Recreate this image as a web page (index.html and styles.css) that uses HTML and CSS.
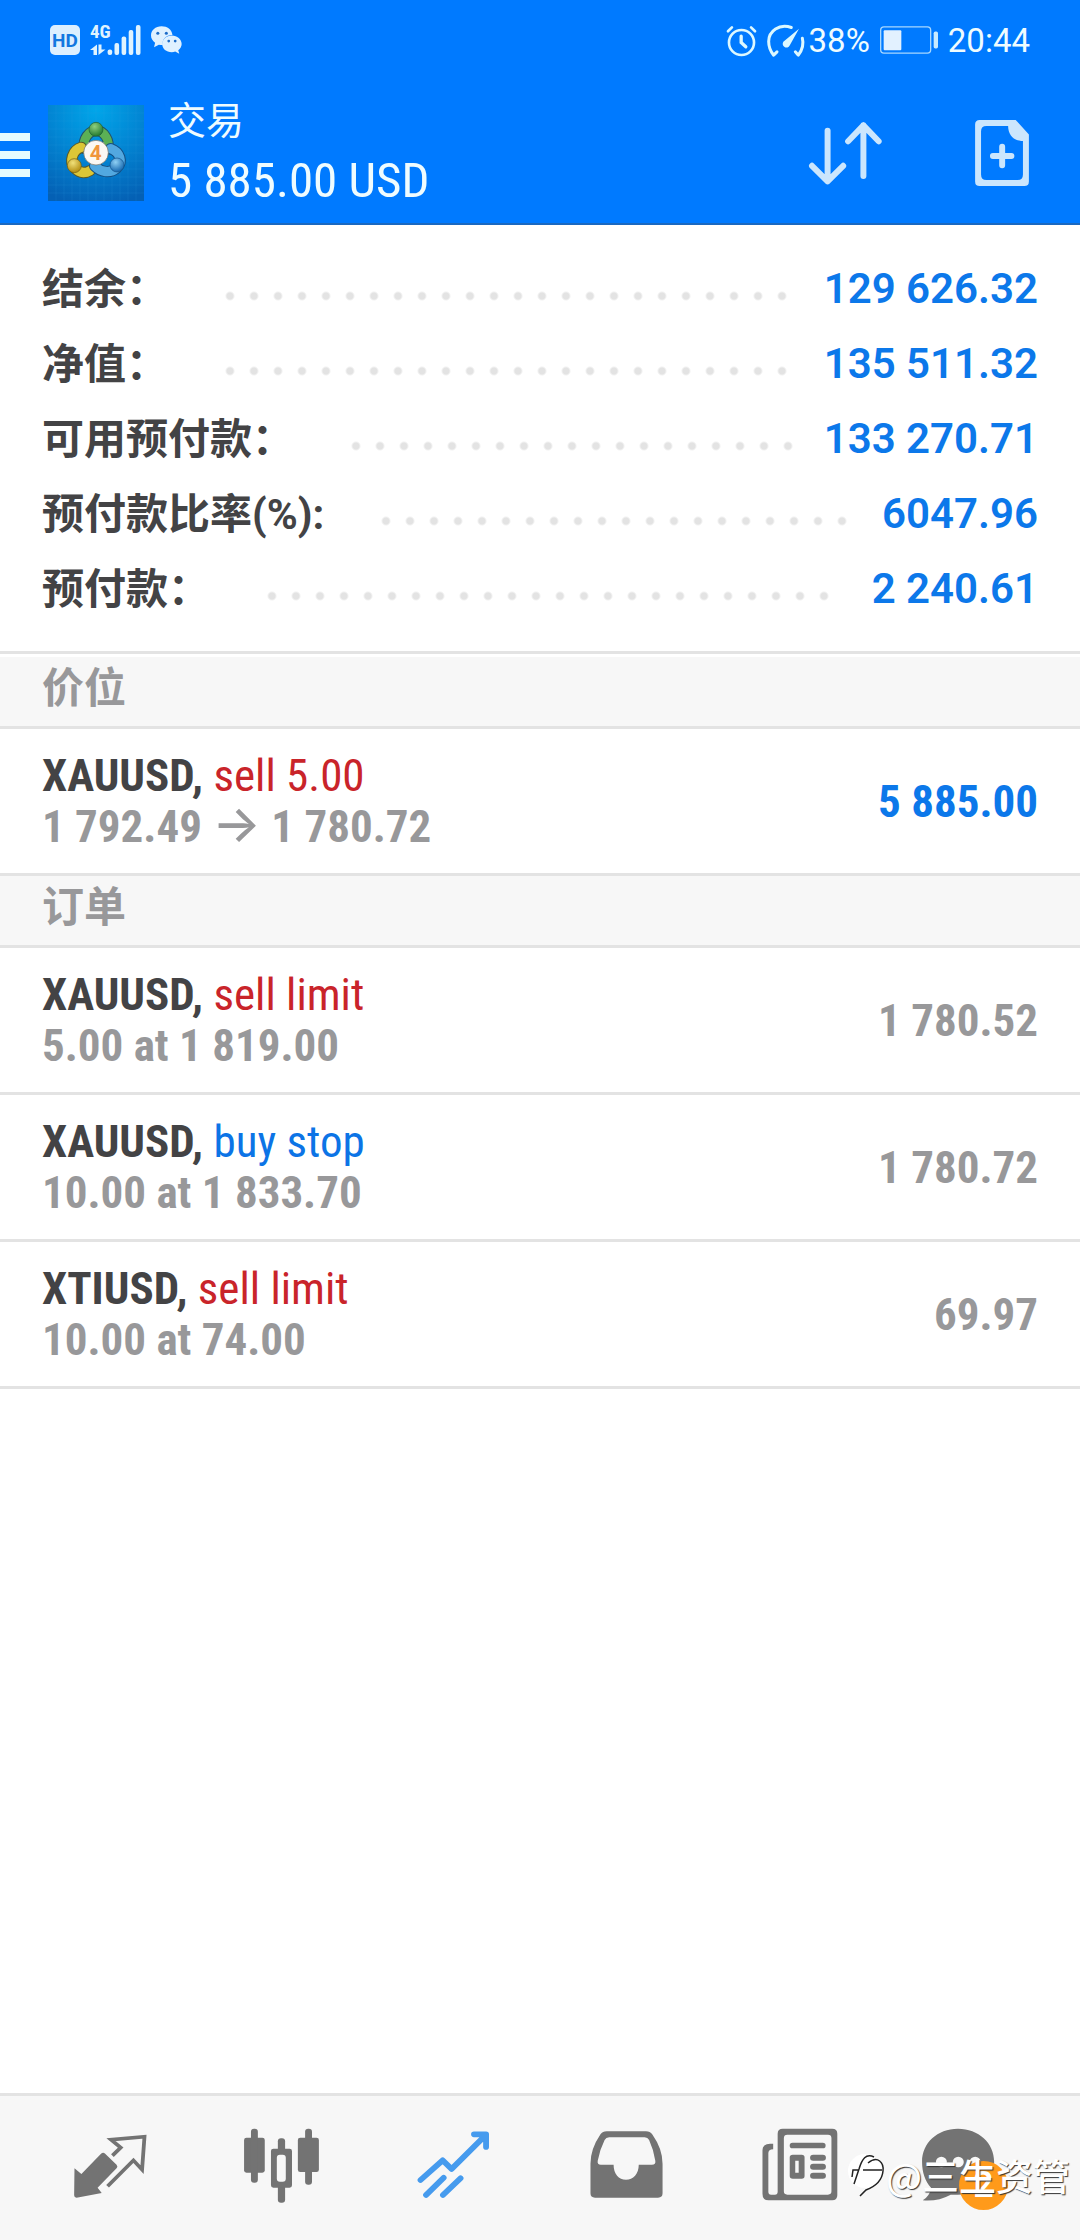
FILE: index.html
```html
<!DOCTYPE html>
<html lang="zh-CN">
<head>
<meta charset="utf-8">
<meta name="viewport" content="width=device-width, initial-scale=1">
<title>交易</title>
<link rel="stylesheet" href="styles.css">
</head>
<body>
<div class="screen">
  <header class="header">
    <div class="status">
      <div class="status-left">
        <svg class="i-hd" viewBox="0 0 30 30" aria-hidden="true"><rect width="30" height="30" rx="5" fill="#dcefff"/><text x="15" y="22" text-anchor="middle" class="hd-text">HD</text></svg>
        <svg class="i-signal" viewBox="0 0 51 32" aria-hidden="true">
          <text x="0" y="14" class="net-text">4G</text>
          <g fill="#dff3ff"><rect x="17.600" y="25.500" width="4.600" height="5.500" rx="2"/><rect x="24.500" y="19" width="4.600" height="12" rx="2"/><rect x="31.600" y="12.500" width="4.600" height="18.500" rx="2"/><rect x="38.700" y="6" width="4.600" height="25" rx="2"/><rect x="45.900" y="1" width="4.600" height="30" rx="2"/>
          <path d="M0 26 7 20.500V31H3.500V26ZM8.500 20.500H11.500V25.500H15.500L8.500 31Z"/></g>
        </svg>
        <svg class="i-wechat" viewBox="440 82 91 82" aria-hidden="true">
          <path fill="#dff1ff" d="M471 83c-18 0-31 12-31 27 0 9 5 16 12 21l-3 13 14-7c4 1 8 1 12 1-4-17 9-30 28-30-2-15-15-25-32-25z"/>
          <path fill="#dff1ff" d="M501 110c-16 0-28 11-28 25s12 24 28 24c4 0 7-1 10-2l12 6-3-10c6-4 10-11 10-18 0-14-13-25-29-25z"/>
          <g fill="#1d6cc8"><circle cx="460" cy="103" r="4.500"/><circle cx="485" cy="103" r="4.500"/><circle cx="492" cy="126" r="4"/><circle cx="511" cy="126" r="4"/></g>
        </svg>
      </div>
      <div class="status-right">
        <svg class="i-alarm" viewBox="256 70 94 98" fill="none" stroke="#dcf8ff" stroke-linecap="round" aria-hidden="true"><circle cx="303" cy="125" r="38" stroke-width="8"/><path stroke-width="8" d="M262 91 274 79M344 91 332 79"/><path stroke-width="10" d="M302 106V125L316 138"/></svg>
        <svg class="i-gauge" viewBox="378 70 114 98" fill="none" stroke="#dcf8ff" stroke-linecap="round" stroke-linejoin="round" aria-hidden="true"><path stroke-width="9" d="M451 80C415 67 383 91 383 122Q383 145 398 163L408 153M484 112Q491 138 472 163L463 153"/><path fill="#dcf8ff" stroke="none" d="M474 84 446 134A11 11 0 1 1 427 123Z"/></svg>
        <span class="percent">38%</span>
        <svg class="i-battery" viewBox="717 80 174 83" aria-hidden="true"><rect x="719" y="82" width="150" height="79" rx="10" fill="none" stroke="#a8d8ff" stroke-width="4"/><rect x="728" y="92" width="53" height="60" rx="3" fill="#e2f1ff"/><rect x="878" y="96" width="13" height="51" rx="5" fill="#c8ebff"/></svg>
        <time class="clock">20:44</time>
      </div>
    </div>
    <div class="appbar">
      <button class="menu" type="button" aria-label="菜单"><span></span><span></span><span></span></button>
      <svg class="logo" viewBox="24 15 288 288" aria-hidden="true">
        <defs>
          <radialGradient id="bg" cx=".5" cy=".05" r="1"><stop offset="0" stop-color="#00a6ea"/><stop offset=".5" stop-color="#0284d2"/><stop offset="1" stop-color="#0460b4"/></radialGradient>
          <radialGradient id="gr" cx=".4" cy=".3" r=".7"><stop offset="0" stop-color="#8fd07e"/><stop offset="1" stop-color="#237a30"/></radialGradient>
          <radialGradient id="ye" cx=".4" cy=".3" r=".7"><stop offset="0" stop-color="#f0e07a"/><stop offset="1" stop-color="#b38d10"/></radialGradient>
          <radialGradient id="bl" cx=".4" cy=".3" r=".7"><stop offset="0" stop-color="#8fd0f4"/><stop offset="1" stop-color="#1668b0"/></radialGradient>
        </defs>
        <rect x="24" y="15" width="288" height="288" fill="url(#bg)"/>
        <path stroke="#38a8e4" stroke-opacity=".3" stroke-width="1.500" d="M48 15V303M72 15V303M96 15V303M120 15V303M144 15V303M168 15V303M192 15V303M216 15V303M240 15V303M264 15V303M288 15V303M24 39H312M24 63H312M24 87H312M24 111H312M24 135H312M24 159H312M24 183H312M24 207H312M24 231H312M24 255H312M24 279H312"/>
        <g fill="none" stroke-linecap="round">
          <path stroke="#24506a" stroke-width="32" d="M132 146C128 116 146 92 169 92S210 120 204 148"/>
          <path stroke="#5bb055" stroke-width="26" d="M132 146C128 116 146 92 169 92S210 120 204 148"/>
          <path stroke="#5b5a28" stroke-width="34" d="M124 142C98 150 86 184 104 204S140 218 150 212"/>
          <path stroke="#dcc636" stroke-width="28" d="M124 142C98 150 86 184 104 204S140 218 150 212"/>
          <path stroke="#145084" stroke-width="34" d="M212 146C240 156 250 186 230 204S182 216 164 198"/>
          <path stroke="#52a8e0" stroke-width="28" d="M212 146C240 156 250 186 230 204S182 216 164 198"/>
        </g>
        <circle cx="168" cy="88" r="21" fill="url(#gr)" stroke="#1d5c34" stroke-width="2"/>
        <circle cx="103" cy="197" r="21" fill="url(#ye)" stroke="#6e5c12" stroke-width="2"/>
        <circle cx="231" cy="195" r="21" fill="url(#bl)" stroke="#12508a" stroke-width="2"/>
        <circle cx="168" cy="158" r="37" fill="#fbf8f4" stroke="#6a6a60" stroke-width="2"/>
        <text x="167" y="180" text-anchor="middle" class="logo-text">4</text>
      </svg>
      <div class="titles">
        <h1 class="title">交易</h1>
        <p class="profit">5 885.00 USD</p>
      </div>
      <div class="actions">
        <button class="icon-button" type="button" aria-label="排序"><svg class="i-sort" viewBox="508 363 220 190" fill="none" stroke="#cbe6fd" stroke-width="18" stroke-linecap="round" stroke-linejoin="round" aria-hidden="true"><path d="M564 389V542M517 495 564 542 611 495M672 526V373M626 421 672 373 718 421"/></svg></button>
        <button class="icon-button" type="button" aria-label="新订单"><svg class="i-doc" viewBox="1004 359 163 200" aria-hidden="true"><path fill="#cbe6fd" fill-rule="evenodd" d="M1018 359H1127L1167 403V545Q1167 559 1153 559H1018Q1004 559 1004 545V373Q1004 359 1018 359ZM1038 377Q1022 377 1022 393V524Q1022 541 1038 541H1133Q1149 541 1149 524V423C1122 423 1104 404 1104 377Z"/><path d="M1086 440V496M1058 468H1114" stroke="#cbe6fd" stroke-width="18" stroke-linecap="round"/></svg></button>
      </div>
    </div>
  </header>

  <main class="content">
    <dl class="summary">
      <div class="summary-row"><dt>结余：</dt><dd>129 626.32</dd></div>
      <div class="summary-row"><dt>净值：</dt><dd>135 511.32</dd></div>
      <div class="summary-row"><dt>可用预付款：</dt><dd>133 270.71</dd></div>
      <div class="summary-row"><dt>预付款比率(%):</dt><dd>6047.96</dd></div>
      <div class="summary-row"><dt>预付款：</dt><dd>2 240.61</dd></div>
    </dl>

    <h2 class="section">价位</h2>
    <ul class="list">
      <li class="item">
        <div class="item-main">
          <p class="symbol">XAUUSD, <span class="sell">sell 5.00</span></p>
          <p class="detail">1 792.49 <span class="arrow">→</span> 1 780.72</p>
        </div>
        <p class="value value-gain">5 885.00</p>
      </li>
    </ul>

    <h2 class="section">订单</h2>
    <ul class="list">
      <li class="item">
        <div class="item-main">
          <p class="symbol">XAUUSD, <span class="sell">sell limit</span></p>
          <p class="detail">5.00 at 1 819.00</p>
        </div>
        <p class="value">1 780.52</p>
      </li>
      <li class="item">
        <div class="item-main">
          <p class="symbol">XAUUSD, <span class="buy">buy stop</span></p>
          <p class="detail">10.00 at 1 833.70</p>
        </div>
        <p class="value">1 780.72</p>
      </li>
      <li class="item">
        <div class="item-main">
          <p class="symbol">XTIUSD, <span class="sell">sell limit</span></p>
          <p class="detail">10.00 at 74.00</p>
        </div>
        <p class="value">69.97</p>
      </li>
    </ul>
  </main>

  <nav class="tabs">
    <button class="tab" type="button" aria-label="行情">
      <svg viewBox="203 130 232 240" preserveAspectRatio="none" aria-hidden="true"><path fill="#737373" d="M216 266 236 283 293 222Q299 216 305 222L338 255Q343 261 338 266L283 324 295 340 222 354Q215 354 215 347Z"/><path fill="none" stroke="#737373" stroke-width="11" stroke-linejoin="miter" stroke-linecap="butt" d="M326 228 350 204 322 180 419 171 412 270 387 242 312 320"/></svg>
    </button>
    <button class="tab" type="button" aria-label="图表">
      <svg viewBox="703 130 232 240" preserveAspectRatio="none" aria-hidden="true"><g fill="#737373"><rect x="709" y="174" width="60" height="105" rx="7"/><rect x="729" y="147" width="20" height="162" rx="9"/><rect x="865" y="174" width="61" height="103" rx="7"/><rect x="886" y="147" width="20" height="168" rx="9"/><rect x="807" y="176" width="21" height="40" rx="9"/><rect x="807" y="315" width="21" height="54" rx="9"/><path fill-rule="evenodd" d="M794 207H841Q848 207 848 214V317Q848 324 841 324H794Q787 324 787 317V214Q787 207 794 207ZM813 225Q804 225 804 234V297Q804 306 813 306H821Q830 306 830 297V234Q830 225 821 225Z"/></g></svg>
    </button>
    <button class="tab" type="button" aria-label="交易" aria-current="page">
      <svg viewBox="1202 130 232 240" preserveAspectRatio="none" fill="none" stroke="#469bee" stroke-width="17" stroke-linecap="round" stroke-linejoin="round" aria-hidden="true"><path d="M1221 301 1285 242 1311 268 1408 168M1376 164H1411V202M1237 346 1288 294M1286 346 1337 296"/></svg>
    </button>
    <button class="tab" type="button" aria-label="历史">
      <svg viewBox="134 130 232 240" preserveAspectRatio="none" aria-hidden="true"><path fill="#737373" fill-rule="evenodd" d="M194 155H308Q320 155 326 164Q356 208 356 252V341Q356 354 343 354H160Q147 354 147 341V252Q147 208 176 164Q182 155 194 155ZM201 173Q192 173 188 181Q174 210 168 243Q166 255 177 255H214C214 283 229 300 250 300S287 283 287 255H325Q337 255 335 243Q330 210 317 181Q313 173 304 173Z"/></svg>
    </button>
    <button class="tab" type="button" aria-label="新闻">
      <svg viewBox="633 130 232 240" preserveAspectRatio="none" aria-hidden="true"><g fill="#737373"><path fill-rule="evenodd" d="M705 147H848Q863 147 863 162V347Q863 362 848 362H664Q646 362 646 342V212Q646 192 668 192H677V209Q663 210 663 220V336Q663 345 671 345H682Q690 345 690 336V162Q690 147 705 147ZM718 165Q708 165 708 175V335Q708 345 718 345H836Q846 345 846 335V175Q846 165 836 165Z"/><rect x="725" y="189" width="104" height="17" rx="8"/><path fill-rule="evenodd" d="M734 225H760Q768 225 768 233V289Q768 297 760 297H734Q725 297 725 289V233Q725 225 734 225ZM741 243V279H751V243Z"/><rect x="784" y="225" width="46" height="18" rx="9"/><rect x="784" y="252" width="46" height="18" rx="9"/><rect x="784" y="279" width="46" height="18" rx="9"/></g></svg>
    </button>
    <button class="tab" type="button" aria-label="消息">
      <span class="tab-icon">
        <svg viewBox="1132 130 232 240" preserveAspectRatio="none" aria-hidden="true"><path fill="#737373" d="M1213 147C1273 147 1318 190 1318 246S1273 345 1213 345H1192Q1155 366 1111 362 1132 348 1135 324C1118 304 1109 278 1109 246 1109 190 1153 147 1213 147Z"/><g fill="#f7f7f7"><circle cx="1165" cy="247" r="16"/><circle cx="1214" cy="247" r="16"/><circle cx="1263" cy="247" r="16"/></g></svg>
        <span class="badge">2</span>
      </span>
    </button>
  </nav>

  <div class="watermark">
    <svg viewBox="0 0 38 44" aria-hidden="true"><circle cx="17" cy="18" r="17" fill="#fff"/><path fill="none" stroke="#222" stroke-width="1.500" d="M26 4C18 0 14 6 11 16L6 31M4 24 5 17H11M15 17H34M20 10C30 2 36 10 35 18 34 29 26 34 18 37L12 43"/></svg>
    <span>@三生资管</span>
  </div>
</div>
</body>
</html>
```
FILE: styles.css
```css
* {
  box-sizing: border-box;
}

body,
h1,
h2,
p,
ul,
dl,
dd {
  margin: 0;
  padding: 0;
}

body {
  background: #fff;
  color: #434345;
  font-family: "Roboto Condensed", Roboto, "Noto Sans CJK SC", sans-serif;
}

button {
  padding: 0;
  border: 0;
  background: none;
}

svg {
  display: block;
  flex: none;
  overflow: visible;
}

.screen {
  position: relative;
  display: flex;
  flex-direction: column;
  min-height: 100vh;
}

/* Header */

.header {
  background: #007aff;
  border-bottom: 2px solid #1b69c0;
  color: #effcff;
}

.status {
  display: flex;
  align-items: center;
  justify-content: space-between;
  height: 80px;
  padding: 0 50px;
}

.status-left,
.status-right {
  display: flex;
  align-items: center;
  gap: 10px;
}

.i-hd { width: 30px; height: 30px; }
.i-signal { width: 51px; height: 32px; }
.i-wechat { width: 31px; height: 28px; }
.i-alarm { width: 31px; height: 33px; }
.i-gauge { width: 38px; height: 33px; }
.i-battery { width: 58px; height: 28px; }

.hd-text {
  fill: #1277e0;
  font: 700 19px Roboto, sans-serif;
}

.net-text {
  fill: #dff3ff;
  font: 700 19px "Roboto Condensed", sans-serif;
}

.percent,
.clock {
  padding-top: 2px;
  font: 400 33px/40px Roboto, sans-serif;
}

.percent {
  margin-left: -6px;
}

.appbar {
  display: flex;
  align-items: center;
  height: 143px;
  padding: 3px 51px 0 0;
}

.menu {
  display: flex;
  flex-direction: column;
  gap: 10px;
  width: 30px;
  padding-top: 4px;
}

.menu span {
  height: 8px;
  background: #e4fbff;
}

.logo {
  width: 96px;
  height: 96px;
  margin-left: 18px;
}

.logo-text {
  fill: #f0963c;
  font: 700 62px Roboto, sans-serif;
}

.titles {
  flex: 1;
  margin-left: 24px;
}

.title {
  font: 400 38px/54px "Noto Sans CJK SC", sans-serif;
}

.profit {
  padding-top: 2px;
  font-size: 49px;
  line-height: 68px;
}

.actions {
  display: flex;
  align-items: center;
  gap: 93px;
}

.i-sort { width: 73px; height: 63px; }
.i-doc { width: 54px; height: 66px; }

/* Account summary */

.content {
  flex: 1;
}

.summary {
  margin-bottom: 3px;
  padding: 26px 42px 25px;
  border-bottom: 3px solid #e3e3e3;
}

.summary-row {
  display: flex;
  align-items: center;
  height: 75px;
  font: 700 42px/75px Roboto, "Noto Sans CJK SC", sans-serif;
}

.summary-row dt {
  flex: none;
  padding-top: 2px;
}

.summary-row::before {
  content: "";
  order: 1;
  flex: 1;
  height: 24px;
  margin: 14px 30px 0 50px;
  background: radial-gradient(circle at 12px 12px, #e3e3e3 3px, transparent 5px) 0 0 / 24px 24px repeat-x;
}

.summary-row dd {
  order: 2;
  color: #0c78ea;
  font-weight: 600;
}

/* Positions and orders */

.section {
  padding: 0 42px 13px;
  border-bottom: 3px solid #e3e3e3;
  background: #f7f7f7;
  color: #98989a;
  font: 700 42px/56px "Noto Sans CJK SC", sans-serif;
}

.list {
  list-style: none;
}

.item {
  display: flex;
  align-items: center;
  justify-content: space-between;
  padding: 21px 42px;
  border-bottom: 3px solid #e3e3e3;
  font-size: 45px;
  font-weight: 700;
  line-height: 51px;
}

.symbol span {
  font-weight: 400;
}

.sell {
  color: #c9242a;
}

.buy {
  color: #0c74e6;
}

.detail,
.value {
  color: #98989a;
}

.value-gain {
  color: #0c78ea;
}

.arrow {
  font-family: Inter, sans-serif;
  font-size: 51px;
  font-weight: 500;
  line-height: 0;
}

/* Bottom navigation */

.tabs {
  display: flex;
  padding: 27px 24px 37px;
  border-top: 3px solid #e3e3e3;
  background: #f7f7f7;
}

.tab {
  display: flex;
  flex: 1;
  justify-content: center;
}

.tab svg {
  width: 80px;
  height: 80px;
}

.tab-icon {
  position: relative;
}

.badge {
  position: absolute;
  top: 38px;
  left: 29px;
  width: 49px;
  height: 49px;
  border-radius: 50%;
  background: #ff9a1a;
  color: #fff;
  font: 500 36px/49px Roboto, sans-serif;
  text-align: center;
}

.watermark {
  position: absolute;
  right: 10px;
  bottom: 38px;
  display: flex;
  align-items: center;
  color: #fff;
  font: 500 37px/54px "Noto Sans CJK SC", sans-serif;
  text-shadow: 1px 1px 1px #333;
}

.watermark svg {
  width: 38px;
  height: 44px;
}
```
